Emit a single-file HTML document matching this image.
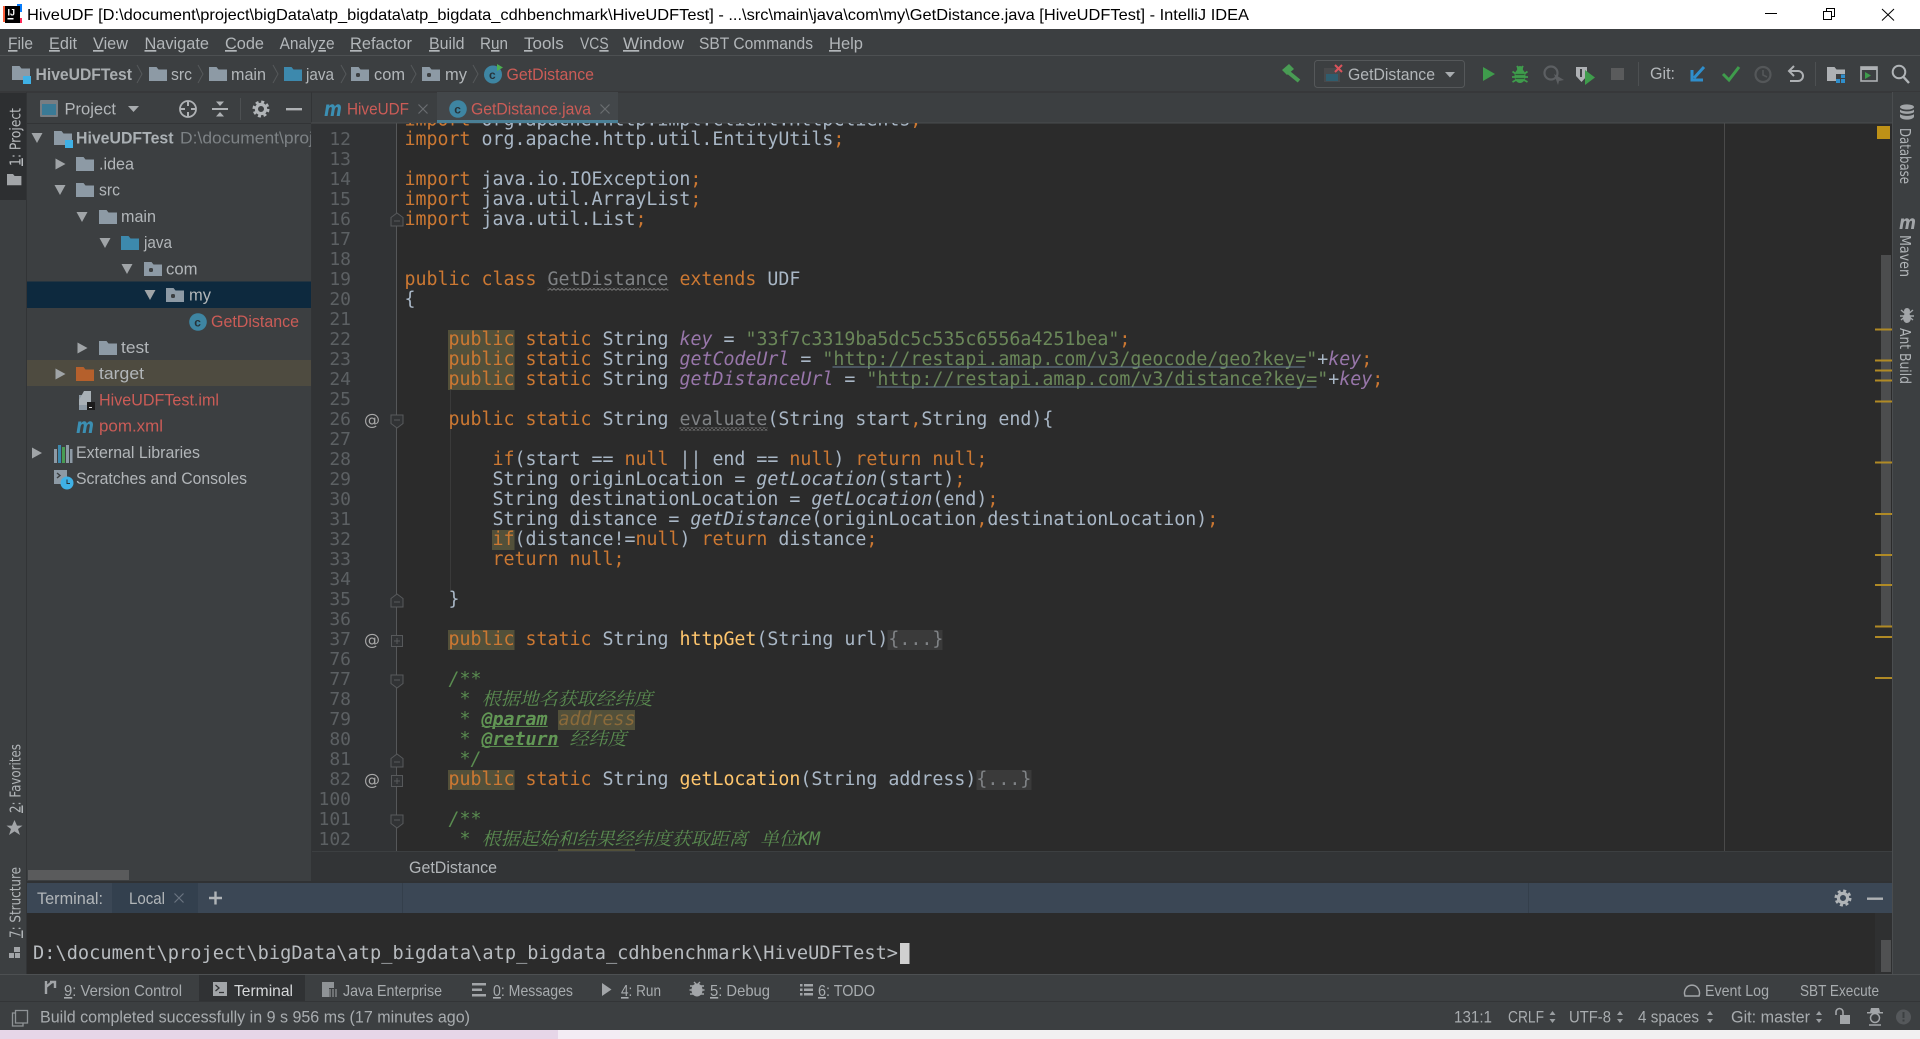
<!DOCTYPE html>
<html><head><meta charset="utf-8"><title>HiveUDF - IntelliJ IDEA</title>
<style>
html,body{margin:0;padding:0;background:#3c3f41;overflow:hidden;width:1920px;height:1039px}
svg{display:block;position:absolute;left:0;top:0}
text{white-space:pre}
.u{font:17px "Liberation Sans",sans-serif;fill:#b2b6b9}
.b{font:16px "Liberation Sans",sans-serif;fill:#a8acaf}
.r{fill:#cb5c57}
.v{font:15px "DejaVu Sans",sans-serif;fill:#b0b4b7}
.m{font:18.27px "DejaVu Sans Mono",monospace;fill:#a9b7c6}
.n{font:18px "DejaVu Sans Mono",monospace;fill:#5c6063;text-anchor:end}
.k{fill:#cc7832}.s{fill:#6a8759}.f{fill:#9876aa;font-style:italic}.y{fill:#ffc66d}.g{fill:#7f8285}.i{font-style:italic}
.c{fill:#5a8c50;font-style:italic}.cb{fill:#629755;font-style:italic;font-weight:bold}
.z{font:italic 18px "Noto Serif CJK SC","Noto Sans CJK SC",serif;fill:#5a8c50}
.ul{text-decoration:underline}
.mi{font:italic bold 21px "DejaVu Sans",sans-serif}
</style></head><body>
<svg xmlns="http://www.w3.org/2000/svg" width="1920" height="1039" viewBox="0 0 1920 1039">
<defs>
<clipPath id="ed"><rect x="311" y="123" width="1581" height="728"/></clipPath>
<clipPath id="tr"><rect x="27" y="124" width="284" height="757"/></clipPath>
<pattern id="wave" width="4" height="3" patternUnits="userSpaceOnUse"><path d="M0 2.5L2 .5L4 2.5" fill="none" stroke="#7a7a7a" stroke-width="1"/></pattern>
<symbol id="fd" viewBox="0 0 18 14" width="18" height="14" overflow="visible"><path d="M0 0h7.5l2 2.5H18V14H0z"/></symbol>
<symbol id="pk" viewBox="0 0 18 14" width="18" height="14" overflow="visible"><path d="M0 0h7.5l2 2.5H18V14H0z"/><rect x="5" y="6" width="4" height="4" rx="1.5" fill="#3c3f41"/></symbol>
<symbol id="ad" viewBox="0 0 11 10" width="11" height="10"><path d="M0 0H11L5.5 10z" fill="#a0a4a7"/></symbol>
<symbol id="ar" viewBox="0 0 10 11" width="10" height="11"><path d="M0 0V11L10 5.5z" fill="#a0a4a7"/></symbol>
<symbol id="gear" viewBox="0 0 18 18" width="18" height="18"><circle cx="9" cy="9" r="4.6" fill="none" stroke="#b0b4b7" stroke-width="3.2"/><circle cx="9" cy="9" r="7.2" fill="none" stroke="#b0b4b7" stroke-width="2.6" stroke-dasharray="3 2.65"/></symbol>
<symbol id="ud" viewBox="0 0 7 12" width="7" height="12"><path d="M3.5 0L6.5 4H.5zM3.5 12L.5 8H6.5z" fill="#9a9ea1"/></symbol>
<symbol id="fs" viewBox="0 0 14 15" width="14" height="15"><path d="M1 1H13V9.5L7 14L1 9.5Z" fill="#313335" stroke="#57595b"/><path d="M4 6H10" stroke="#57595b"/></symbol>
<symbol id="fe" viewBox="0 0 14 15" width="14" height="15"><path d="M1 14H13V5.5L7 1L1 5.5Z" fill="#313335" stroke="#57595b"/><path d="M4 9H10" stroke="#57595b"/></symbol>
<symbol id="fp" viewBox="0 0 12 12" width="12" height="12"><path d="M.5 .5H11.5V11.5H.5Z" fill="#313335" stroke="#57595b"/><path d="M3 6H9M6 3V9" stroke="#57595b"/></symbol>
</defs>

<rect width="1920" height="1039" fill="#3c3f41"/>
<!-- title bar -->
<rect width="1920" height="29" fill="#fff"/>
<rect x="3" y="6" width="6" height="16" fill="#fc5f3c"/><rect x="17" y="4" width="5" height="8" fill="#087cfa"/><rect x="14" y="18" width="8" height="5" fill="#fe2857"/>
<rect x="5" y="6" width="15" height="17" fill="#000"/>
<text x="7.5" y="15.5" style="font:bold 9px 'Liberation Sans',sans-serif" fill="#fff">IJ</text><rect x="7.5" y="18" width="6" height="1.5" fill="#fff"/>
<text x="27" y="20" style="font:16px 'Liberation Sans',sans-serif" fill="#000" textLength="1222" lengthAdjust="spacingAndGlyphs">HiveUDF [D:\document\project\bigData\atp_bigdata\atp_bigdata_cdhbenchmark\HiveUDFTest] - ...\src\main\java\com\my\GetDistance.java [HiveUDFTest] - IntelliJ IDEA</text>
<rect x="1765" y="13" width="12" height="1" fill="#000"/>
<path d="M1823.5 11.5h8v8h-8zM1826.5 11.5v-3h8v8h-3" fill="none" stroke="#000"/>
<path d="M1882 9L1894 20.5M1894 9L1882 20.5" stroke="#000" fill="none"/>

<!-- menu -->
<rect x="0" y="55" width="1920" height="1" fill="#4d5052"/>
<g class="u">
<text class="u" x="8" y="49" textLength="25" lengthAdjust="spacingAndGlyphs"><tspan class="ul">F</tspan>ile</text>
<text class="u" x="49" y="49" textLength="28" lengthAdjust="spacingAndGlyphs"><tspan class="ul">E</tspan>dit</text>
<text class="u" x="93" y="49" textLength="35" lengthAdjust="spacingAndGlyphs"><tspan class="ul">V</tspan>iew</text>
<text class="u" x="144.5" y="49" textLength="64.5" lengthAdjust="spacingAndGlyphs"><tspan class="ul">N</tspan>avigate</text>
<text class="u" x="225" y="49" textLength="39" lengthAdjust="spacingAndGlyphs"><tspan class="ul">C</tspan>ode</text>
<text class="u" x="279.6" y="49" textLength="55" lengthAdjust="spacingAndGlyphs">Analy<tspan class="ul">z</tspan>e</text>
<text class="u" x="350" y="49" textLength="62" lengthAdjust="spacingAndGlyphs"><tspan class="ul">R</tspan>efactor</text>
<text class="u" x="429" y="49" textLength="35.5" lengthAdjust="spacingAndGlyphs"><tspan class="ul">B</tspan>uild</text>
<text class="u" x="480" y="49" textLength="28" lengthAdjust="spacingAndGlyphs">R<tspan class="ul">u</tspan>n</text>
<text class="u" x="524" y="49" textLength="39.7" lengthAdjust="spacingAndGlyphs"><tspan class="ul">T</tspan>ools</text>
<text class="u" x="580" y="49" textLength="28.6" lengthAdjust="spacingAndGlyphs">VC<tspan class="ul">S</tspan></text>
<text class="u" x="623" y="49" textLength="61" lengthAdjust="spacingAndGlyphs"><tspan class="ul">W</tspan>indow</text>
<text class="u" x="699" y="49" textLength="114" lengthAdjust="spacingAndGlyphs">SBT Commands</text>
<text class="u" x="829" y="49" textLength="34" lengthAdjust="spacingAndGlyphs"><tspan class="ul">H</tspan>elp</text>
</g>

<!-- nav toolbar -->
<rect x="0" y="91.5" width="1920" height="1" fill="#323232"/>
<use href="#fd" x="12" y="66" fill="#8d9aa5"/><rect x="23" y="76" width="8" height="8" fill="#3fb1e6"/>
<text class="u" x="35.5" y="80" style="font-weight:bold;fill:#a9adb0" textLength="96.5" lengthAdjust="spacingAndGlyphs">HiveUDFTest</text>
<g fill="none" stroke="#55585a" stroke-width="1">
<path d="M137 65L142 74L137 83M198 65L203 74L198 83M273 65L278 74L273 83M341 65L346 74L341 83M411 65L416 74L411 83M473 65L478 74L473 83"/></g>
<use href="#fd" x="149" y="67" fill="#8d9aa5"/><text class="u" x="171" y="80" textLength="21" lengthAdjust="spacingAndGlyphs">src</text>
<use href="#fd" x="209" y="67" fill="#8d9aa5"/><text class="u" x="231" y="80" textLength="35" lengthAdjust="spacingAndGlyphs">main</text>
<use href="#fd" x="284" y="67" fill="#3d89ad"/><text class="u" x="306" y="80" textLength="28" lengthAdjust="spacingAndGlyphs">java</text>
<use href="#pk" x="351" y="67" fill="#8d9aa5"/><text class="u" x="374" y="80" textLength="31" lengthAdjust="spacingAndGlyphs">com</text>
<use href="#pk" x="422" y="67" fill="#8d9aa5"/><text class="u" x="445" y="80" textLength="22" lengthAdjust="spacingAndGlyphs">my</text>
<circle cx="493" cy="74.5" r="9" fill="#3e85a2"/><text x="489" y="79" style="font:bold 12px 'Liberation Sans',sans-serif" fill="#263238">c</text><path d="M497 64L503 67.5L497 71Z" fill="#4caf50"/>
<text class="u r" x="506.5" y="80" textLength="87.5" lengthAdjust="spacingAndGlyphs">GetDistance</text>

<path d="M1282 70L1289 64L1294 69L1287 75Z" fill="#499c54"/><path d="M1288 72L1299 81" stroke="#499c54" stroke-width="4"/>
<rect x="1314.5" y="60.5" width="150" height="27" rx="3" fill="#3c3f41" stroke="#55585a"/>
<rect x="1324" y="68" width="16" height="14" fill="#48494b"/><rect x="1326" y="74" width="12" height="7" fill="#2f5d6e"/>
<path d="M1335 65L1342 72M1342 65L1335 72" stroke="#d9535b" stroke-width="2"/>
<text class="u" x="1348" y="80" textLength="87" lengthAdjust="spacingAndGlyphs">GetDistance</text>
<path d="M1445 72H1455L1450 77.5Z" fill="#a8acaf"/>
<path d="M1483 67V81L1495 74Z" fill="#3f9c4c"/>
<path d="M1512.5 71.5L1516 74M1527.5 71.5L1524 74M1512 77H1528M1512.5 82L1516 80M1527.5 82L1524 80M1517 66L1518.5 68.5M1523 66L1521.5 68.5" stroke="#3f9c4c" stroke-width="1.8" fill="none"/>
<ellipse cx="1520" cy="76" rx="5.5" ry="7" fill="#3f9c4c"/><circle cx="1520" cy="69" r="3" fill="#3f9c4c"/><path d="M1515.5 74.5H1524.5M1515.5 78.5H1524.5" stroke="#2f5a36" stroke-width="1.3"/>
<circle cx="1551" cy="73" r="6.5" fill="none" stroke="#5c5f62" stroke-width="2.2"/><path d="M1554 74L1564 80L1559 81L1558 85Z" fill="#5c5f62"/>
<path d="M1576 67H1587V76L1581.5 82L1576 76Z" fill="#aeb1b4"/><path d="M1585 70V85L1595 77.5Z" fill="#3f9c4c"/><path d="M1581 69V77" stroke="#3c3f41" stroke-width="2"/>
<rect x="1611" y="68" width="13" height="12" fill="#5a5b5c"/>
<rect x="1638" y="62" width="1" height="24" fill="#4d5052"/>
<text class="u" x="1650" y="79" textLength="25" lengthAdjust="spacingAndGlyphs">Git:</text>
<path d="M1704 67L1694 78" stroke="#2f8ecb" stroke-width="3"/><path d="M1692 70V80H1703" fill="none" stroke="#2f8ecb" stroke-width="3"/>
<path d="M1723 74L1729 80L1739 67" fill="none" stroke="#3f9c4c" stroke-width="3"/>
<circle cx="1763" cy="74.5" r="7.5" fill="none" stroke="#545759" stroke-width="2.2"/><path d="M1763 70V75L1767 77" fill="none" stroke="#545759" stroke-width="1.6"/>
<path d="M1790 71H1798A5 5 0 0 1 1798 81H1790" fill="none" stroke="#aeb1b4" stroke-width="2"/><path d="M1794 66L1789 71L1794 76" fill="none" stroke="#aeb1b4" stroke-width="2"/>
<rect x="1815" y="62" width="1" height="24" fill="#4d5052"/>
<use href="#fd" x="1827" y="67" fill="#aeb1b4"/><rect x="1836" y="74" width="9" height="9" fill="#3c3f41"/><path d="M1841 74.5h4v3.5h-4zM1836 79h4v4h-4zM1841 79h4v4h-4z" fill="#2f8ecb"/>
<rect x="1861" y="67" width="16" height="14" fill="none" stroke="#aeb1b4" stroke-width="1.6"/><rect x="1861" y="67" width="16" height="3" fill="#aeb1b4"/><path d="M1865 72V79L1871 75.5Z" fill="#3f9c4c"/>
<circle cx="1899" cy="72" r="6.3" fill="none" stroke="#b0b4b7" stroke-width="2"/><path d="M1903.5 77L1909 83" stroke="#b0b4b7" stroke-width="2.4"/>

<!-- left strip -->
<rect x="26" y="92" width="1" height="882" fill="#323436"/>
<rect x="0" y="93" width="26" height="107" fill="#2d2f31"/>
<text class="v" transform="translate(20.5 166) rotate(-90)" textLength="58" lengthAdjust="spacingAndGlyphs" style="fill:#b8bbbe"><tspan class="ul">1</tspan>: Project</text>
<use href="#fd" x="0" y="0" transform="translate(7 174) scale(.8)" fill="#a2a5a8"/>
<text class="v" transform="translate(20.5 813) rotate(-90)" textLength="69" lengthAdjust="spacingAndGlyphs"><tspan class="ul">2</tspan>: Favorites</text>
<path d="M14.5 820L17 825.6H22.5L18 829L20 835L14.5 831.4L9 835L11 829L6.5 825.6H12Z" fill="#a2a5a8"/>
<text class="v" transform="translate(20.5 938) rotate(-90)" textLength="71" lengthAdjust="spacingAndGlyphs"><tspan class="ul">7</tspan>: Structure</text>
<path d="M14 947h6v5h-6zM9 953h5v5H9zM15 953h5v5h-5z" fill="#a2a5a8"/>

<!-- project panel -->
<rect x="27" y="123" width="284" height="1" fill="#323436"/>
<rect x="40" y="100" width="18" height="17" rx="1" fill="#787d82"/><rect x="42" y="104" width="14" height="11" fill="#3a7a96"/>
<text class="u" x="64.5" y="114.5" textLength="51.5" lengthAdjust="spacingAndGlyphs">Project</text>
<path d="M128 106H139L133.5 112Z" fill="#a8acaf"/>
<circle cx="188" cy="109" r="8" fill="none" stroke="#aeb1b4" stroke-width="1.8"/><path d="M188 101V106M188 112V117M180 109H185M191 109H196" stroke="#aeb1b4" stroke-width="2"/>
<path d="M212 109H228" stroke="#aeb1b4" stroke-width="2"/><path d="M216 101.5H224L220 106ZM216 116.5H224L220 112Z" fill="#aeb1b4"/>
<rect x="240" y="98" width="1" height="22" fill="#4d5052"/>
<use href="#gear" x="252" y="100"/>
<rect x="286" y="108" width="16" height="2.4" fill="#aeb1b4"/>

<rect x="27" y="281.5" width="284" height="26.5" fill="#0d293e"/>
<rect x="27" y="360" width="284" height="26" fill="#4e4b40"/>
<g clip-path="url(#tr)">
<use href="#ad" x="31.5" y="133"/><use href="#fd" x="54" y="131" fill="#8d9aa5"/><rect x="65" y="140" width="8" height="8" fill="#3fb1e6"/>
<text class="u" x="76" y="143.5" style="font-weight:bold;fill:#aab0b4" textLength="97.5" lengthAdjust="spacingAndGlyphs">HiveUDFTest</text>
<text class="u" x="180" y="143.5" style="fill:#7d8285" textLength="133" lengthAdjust="spacingAndGlyphs">D:\document\proj</text>
<use href="#ar" x="55.5" y="158.5"/><use href="#fd" x="76" y="157" fill="#8d9aa5"/><text class="u" x="99" y="169.5" textLength="35" lengthAdjust="spacingAndGlyphs">.idea</text>
<use href="#ad" x="54.5" y="185"/><use href="#fd" x="76" y="183" fill="#8d9aa5"/><text class="u" x="99" y="195.7" textLength="21" lengthAdjust="spacingAndGlyphs">src</text>
<use href="#ad" x="76.5" y="212"/><use href="#fd" x="99" y="210" fill="#8d9aa5"/><text class="u" x="121" y="222" textLength="35" lengthAdjust="spacingAndGlyphs">main</text>
<use href="#ad" x="99.5" y="238"/><use href="#fd" x="121" y="236" fill="#3d89ad"/><text class="u" x="144" y="248" textLength="28" lengthAdjust="spacingAndGlyphs">java</text>
<use href="#ad" x="121.5" y="264"/><use href="#pk" x="144" y="262" fill="#8d9aa5"/><text class="u" x="166" y="274.4" textLength="31.5" lengthAdjust="spacingAndGlyphs">com</text>
<use href="#ad" x="144.5" y="290"/><use href="#pk" x="166" y="288" fill="#8d9aa5"/><text class="u" x="189" y="300.6" textLength="22" lengthAdjust="spacingAndGlyphs">my</text>
<circle cx="198" cy="322" r="8.8" fill="#3e85a2"/><text x="194.3" y="326.5" style="font:bold 12px 'Liberation Sans',sans-serif" fill="#263238">c</text>
<text class="u r" x="211" y="326.8" textLength="88" lengthAdjust="spacingAndGlyphs">GetDistance</text>
<use href="#ar" x="77.5" y="342.5"/><use href="#fd" x="99" y="341" fill="#8d9aa5"/><text class="u" x="121" y="353" textLength="28" lengthAdjust="spacingAndGlyphs">test</text>
<use href="#ar" x="55.5" y="368.5"/><use href="#fd" x="76" y="367" fill="#b5602c"/><text class="u" x="99" y="379.2" textLength="45" lengthAdjust="spacingAndGlyphs">target</text>
<path d="M79 395H88V410H79Z" fill="#8d9aa5"/><path d="M79 400L84 391H91V405H79Z" fill="#a8b0b6"/><rect x="87" y="402" width="8" height="8" fill="#1c1c1c"/><rect x="89" y="407" width="3" height="1" fill="#ddd"/>
<text class="u r" x="99" y="405.4" textLength="120" lengthAdjust="spacingAndGlyphs">HiveUDFTest.iml</text>
<text class="mi" x="76" y="433" fill="#3b8fb3" textLength="18" lengthAdjust="spacingAndGlyphs">m</text>
<text class="u r" x="99" y="431.6" textLength="64" lengthAdjust="spacingAndGlyphs">pom.xml</text>
<use href="#ar" x="32" y="447.5"/><path d="M54 449h3v14h-3z" fill="#8d9aa5"/><path d="M58 445h3v18h-3z" fill="#3d89ad"/><path d="M62 447h3v16h-3z" fill="#499c54"/><path d="M66 445h3v18h-3z" fill="#8d9aa5"/><path d="M70 449h2.5v14H70z" fill="#8d9aa5"/>
<text class="u" x="76" y="457.8" textLength="124" lengthAdjust="spacingAndGlyphs">External Libraries</text>
<rect x="54" y="470" width="13" height="14" fill="#8d9aa5"/><path d="M57 473l3 2.5-3 2.5" fill="none" stroke="#3c3f41" stroke-width="1.4"/><circle cx="67" cy="483" r="6.5" fill="#3fb1e6"/><path d="M67 479.5V483.5H70" fill="none" stroke="#263238" stroke-width="1"/>
<text class="u" x="76" y="484" textLength="171" lengthAdjust="spacingAndGlyphs">Scratches and Consoles</text>
</g>
<rect x="28" y="870" width="101" height="10" fill="#5a5b5c"/>

<!-- tabs -->
<rect x="311" y="92" width="1" height="789" fill="#323436"/>
<rect x="311" y="122.5" width="1581" height="1" fill="#4a4d4f"/>
<text class="mi" x="324" y="116" fill="#3b8fb3" textLength="18" lengthAdjust="spacingAndGlyphs">m</text>
<text class="u r" x="347" y="114.5" textLength="62" lengthAdjust="spacingAndGlyphs">HiveUDF</text>
<path d="M418.5 104.5L427.5 113.5M427.5 104.5L418.5 113.5" stroke="#6a6d70" stroke-width="1.2"/>
<rect x="437" y="92" width="181" height="31" fill="#43474a"/>
<rect x="437" y="120" width="181" height="3" fill="#4a7f95"/>
<circle cx="458" cy="109" r="8.8" fill="#3e85a2"/><text x="454.3" y="113.5" style="font:bold 12px 'Liberation Sans',sans-serif" fill="#263238">c</text>
<text class="u r" x="471" y="114.5" textLength="120" lengthAdjust="spacingAndGlyphs">GetDistance.java</text>
<path d="M600.5 104.5L609.5 113.5M609.5 104.5L600.5 113.5" stroke="#6a6d70" stroke-width="1.2"/>

<!-- editor -->
<rect x="312" y="123.5" width="85" height="727.5" fill="#313335"/>
<rect x="397" y="123.5" width="1495" height="727.5" fill="#2b2b2b"/>
<rect x="396" y="123.5" width="1" height="727.5" fill="#555759"/>
<rect x="1724" y="123.5" width="1" height="727.5" fill="#4a4a4a"/>
<rect x="450" y="350" width="1" height="240" fill="#3a3a3a"/>

<g fill="#52503a">
<rect x="448" y="330" width="66.5" height="60"/>
<rect x="448" y="630" width="66.5" height="20"/>
<rect x="448" y="770" width="66.5" height="20"/>
<rect x="492" y="530" width="22.5" height="20"/>
<rect x="558" y="710" width="77" height="20"/>
<rect x="558" y="849" width="77" height="2"/>
</g>
<rect x="887.5" y="630" width="55" height="20" fill="#3a3a3a"/>
<rect x="976.5" y="770" width="55" height="20" fill="#3a3a3a"/>

<g class="n">
<text class="n" x="351" y="145">12</text><text class="n" x="351" y="165">13</text><text class="n" x="351" y="185">14</text><text class="n" x="351" y="205">15</text><text class="n" x="351" y="225">16</text><text class="n" x="351" y="245">17</text><text class="n" x="351" y="265">18</text><text class="n" x="351" y="285">19</text><text class="n" x="351" y="305">20</text><text class="n" x="351" y="325">21</text><text class="n" x="351" y="345">22</text><text class="n" x="351" y="365">23</text><text class="n" x="351" y="385">24</text><text class="n" x="351" y="405">25</text><text class="n" x="351" y="425">26</text><text class="n" x="351" y="445">27</text><text class="n" x="351" y="465">28</text><text class="n" x="351" y="485">29</text><text class="n" x="351" y="505">30</text><text class="n" x="351" y="525">31</text><text class="n" x="351" y="545">32</text><text class="n" x="351" y="565">33</text><text class="n" x="351" y="585">34</text><text class="n" x="351" y="605">35</text><text class="n" x="351" y="625">36</text><text class="n" x="351" y="645">37</text><text class="n" x="351" y="665">76</text><text class="n" x="351" y="685">77</text><text class="n" x="351" y="705">78</text><text class="n" x="351" y="725">79</text><text class="n" x="351" y="745">80</text><text class="n" x="351" y="765">81</text><text class="n" x="351" y="785">82</text><text class="n" x="351" y="805">100</text><text class="n" x="351" y="825">101</text><text class="n" x="351" y="845">102</text>
</g>
<g style="font:16px 'DejaVu Sans',sans-serif" fill="#a9a9a9"><text x="364" y="425">@</text><text x="364" y="645">@</text><text x="364" y="785">@</text></g>
<use href="#fe" x="390" y="212"/><use href="#fs" x="390" y="414"/><use href="#fe" x="390" y="593"/><use href="#fp" x="391" y="635"/><use href="#fs" x="390" y="674"/><use href="#fe" x="390" y="753"/><use href="#fp" x="391" y="775"/><use href="#fs" x="390" y="814"/>

<g clip-path="url(#ed)">
<text class="m" x="404.5" y="125.5"><tspan class="k">import</tspan> org.apache.http.impl.client.HttpClients<tspan class="k">;</tspan></text>
<text class="m" x="404.5" y="145"><tspan class="k">import</tspan> org.apache.http.util.EntityUtils<tspan class="k">;</tspan></text>
<text class="m" x="404.5" y="185"><tspan class="k">import</tspan> java.io.IOException<tspan class="k">;</tspan></text>
<text class="m" x="404.5" y="205"><tspan class="k">import</tspan> java.util.ArrayList<tspan class="k">;</tspan></text>
<text class="m" x="404.5" y="225"><tspan class="k">import</tspan> java.util.List<tspan class="k">;</tspan></text>
<text class="m" x="404.5" y="285"><tspan class="k">public class</tspan> <tspan class="g">GetDistance</tspan> <tspan class="k">extends</tspan> UDF</text>
<text class="m" x="404.5" y="305">{</text>
<text class="m" x="404.5" y="345">    <tspan class="k">public static</tspan> String <tspan class="f">key</tspan> = <tspan class="s">"33f7c3319ba5dc5c535c6556a4251bea"</tspan><tspan class="k">;</tspan></text>
<text class="m" x="404.5" y="365">    <tspan class="k">public static</tspan> String <tspan class="f">getCodeUrl</tspan> = <tspan class="s">"http://restapi.amap.com/v3/geocode/geo?key="</tspan>+<tspan class="f">key</tspan><tspan class="k">;</tspan></text>
<text class="m" x="404.5" y="385">    <tspan class="k">public static</tspan> String <tspan class="f">getDistanceUrl</tspan> = <tspan class="s">"http://restapi.amap.com/v3/distance?key="</tspan>+<tspan class="f">key</tspan><tspan class="k">;</tspan></text>
<text class="m" x="404.5" y="425">    <tspan class="k">public static</tspan> String <tspan class="g">evaluate</tspan>(String start<tspan class="k">,</tspan>String end){</text>
<text class="m" x="404.5" y="465">        <tspan class="k">if</tspan>(start == <tspan class="k">null</tspan> || end == <tspan class="k">null</tspan>) <tspan class="k">return null;</tspan></text>
<text class="m" x="404.5" y="485">        String originLocation = <tspan class="i">getLocation</tspan>(start)<tspan class="k">;</tspan></text>
<text class="m" x="404.5" y="505">        String destinationLocation = <tspan class="i">getLocation</tspan>(end)<tspan class="k">;</tspan></text>
<text class="m" x="404.5" y="525">        String distance = <tspan class="i">getDistance</tspan>(originLocation<tspan class="k">,</tspan>destinationLocation)<tspan class="k">;</tspan></text>
<text class="m" x="404.5" y="545">        <tspan class="k">if</tspan>(distance!=<tspan class="k">null</tspan>) <tspan class="k">return</tspan> distance<tspan class="k">;</tspan></text>
<text class="m" x="404.5" y="565">        <tspan class="k">return null;</tspan></text>
<text class="m" x="404.5" y="605">    }</text>
<text class="m" x="404.5" y="645">    <tspan class="k">public static</tspan> String <tspan class="y">httpGet</tspan>(String url)<tspan style="fill:#7f8285">{...}</tspan></text>
<text class="m c" x="404.5" y="685">    /**</text>
<text class="m c" x="404.5" y="705">     *</text><text class="z" x="481.7" y="705" textLength="171" lengthAdjust="spacingAndGlyphs">根据地名获取经纬度</text>
<text class="m c" x="404.5" y="725">     * <tspan class="cb">@param</tspan> <tspan style="fill:#8a6a3a">address</tspan></text>
<text class="m c" x="404.5" y="745">     * <tspan class="cb">@return</tspan></text><text class="z" x="569.4" y="745" textLength="57" lengthAdjust="spacingAndGlyphs">经纬度</text>
<text class="m c" x="404.5" y="765">     */</text>
<text class="m" x="404.5" y="785">    <tspan class="k">public static</tspan> String <tspan class="y">getLocation</tspan>(String address)<tspan style="fill:#7f8285">{...}</tspan></text>
<text class="m c" x="404.5" y="825">    /**</text>
<text class="m c" x="404.5" y="845">     *</text><text class="z" x="481.7" y="845" textLength="266" lengthAdjust="spacingAndGlyphs">根据起始和结果经纬度获取距离</text><text class="z" x="760" y="845" textLength="38" lengthAdjust="spacingAndGlyphs">单位</text><text class="m c" x="798" y="845">KM</text>
</g>
<rect x="547.5" y="287.5" width="121" height="3" fill="url(#wave)"/>
<rect x="679.5" y="427.5" width="88" height="3" fill="url(#wave)"/>
<rect x="832.5" y="366.5" width="472" height="1" fill="#6a7f96"/>
<rect x="876.5" y="386.5" width="440" height="1" fill="#6a7f96"/>
<rect x="481.7" y="726" width="66" height="1" fill="#5a8c50"/>
<rect x="481.7" y="746" width="77" height="1" fill="#5a8c50"/>

<!-- scrollbar / stripe -->
<rect x="1881" y="255" width="10" height="371" fill="#4c4d4e"/>
<rect x="1877" y="126" width="13" height="13" fill="#be9117"/>
<g fill="#b08a25">
<rect x="1875" y="328.5" width="17" height="2"/><rect x="1875" y="359.5" width="17" height="2"/><rect x="1875" y="369.5" width="17" height="2"/><rect x="1875" y="379.5" width="17" height="2"/><rect x="1875" y="400.5" width="17" height="2"/><rect x="1875" y="461.5" width="17" height="2"/><rect x="1875" y="513" width="17" height="2"/><rect x="1875" y="554" width="17" height="2"/><rect x="1875" y="584" width="17" height="2"/><rect x="1875" y="625.5" width="17" height="2"/><rect x="1875" y="636" width="17" height="2"/><rect x="1875" y="677" width="17" height="2"/>
</g>

<!-- right strip -->
<rect x="1892" y="92" width="1" height="882" fill="#4a4d4f"/>
<rect x="1893" y="92" width="27" height="882" fill="#3c3f41"/>
<g fill="#a2a5a8"><ellipse cx="1907" cy="107" rx="7" ry="2.6"/><path d="M1900 109.5C1902 112 1912 112 1914 109.5V112C1912 114.5 1902 114.5 1900 112ZM1900 114C1902 116.5 1912 116.5 1914 114V117C1912 120.5 1902 120.5 1900 117Z"/></g>
<text class="v" transform="translate(1900 128) rotate(90)" textLength="56" lengthAdjust="spacingAndGlyphs">Database</text>
<text class="mi" x="1899" y="229" style="font-size:19px" fill="#a2a5a8" textLength="17" lengthAdjust="spacingAndGlyphs">m</text>
<text class="v" transform="translate(1900 235) rotate(90)" textLength="42" lengthAdjust="spacingAndGlyphs">Maven</text>
<g fill="#a2a5a8"><ellipse cx="1907" cy="311" rx="3" ry="3"/><ellipse cx="1907" cy="318" rx="4" ry="5"/></g><path d="M1901 310L1913 320M1913 310L1901 320M1900 316H1914" stroke="#a2a5a8" stroke-width="1.4"/>
<text class="v" transform="translate(1900 328) rotate(90)" textLength="56" lengthAdjust="spacingAndGlyphs">Ant Build</text>

<!-- editor breadcrumb -->
<rect x="312" y="851" width="1580" height="30" fill="#323436"/>
<rect x="312" y="851" width="1580" height="1" fill="#3c3f41"/>
<text class="u" x="409" y="873" textLength="88" lengthAdjust="spacingAndGlyphs">GetDistance</text>

<!-- terminal -->
<rect x="27" y="881" width="1865" height="2" fill="#303234"/>
<rect x="27" y="883" width="1865" height="30" fill="#3b4755"/>
<rect x="112" y="883" width="86" height="30" fill="#33404e"/>
<rect x="402" y="883" width="1" height="30" fill="#343f4b"/><rect x="1528" y="883" width="1" height="30" fill="#343f4b"/>
<text class="u" x="37" y="904" textLength="66" lengthAdjust="spacingAndGlyphs">Terminal:</text>
<text class="u" x="129" y="904" textLength="36" lengthAdjust="spacingAndGlyphs">Local</text>
<path d="M174.5 893.5L183.5 902.5M183.5 893.5L174.5 902.5" stroke="#6a7480" stroke-width="1.2"/>
<path d="M209 898H222M215.5 891.5V904.5" stroke="#b0b4b7" stroke-width="2.4"/>
<use href="#gear" x="1834" y="889"/>
<rect x="1867" y="897.5" width="16" height="2.4" fill="#aeb1b4"/>
<rect x="27" y="913" width="1865" height="61" fill="#2b2b2b"/>
<text class="m" x="33" y="959" style="font-size:18.6px;fill:#b8bcc0" textLength="865" lengthAdjust="spacing">D:\document\project\bigData\atp_bigdata\atp_bigdata_cdhbenchmark\HiveUDFTest&gt;</text>
<rect x="900" y="943" width="9.5" height="21" fill="#d0d0d0"/>
<rect x="1875" y="913" width="17" height="61" fill="#2f3031"/>
<rect x="1881" y="940" width="10" height="32" fill="#505152"/>

<!-- tool buttons bar -->
<rect x="0" y="974" width="1920" height="1" fill="#4d5052"/>
<rect x="0" y="1001" width="1920" height="1" fill="#333537"/>
<rect x="199" y="975" width="106" height="26" fill="#303234"/>
<path d="M46 981V994M46 987L52 982M50 982H55V988" fill="none" stroke="#a2a5a8" stroke-width="2.4"/>
<text class="b" x="64" y="996" textLength="118" lengthAdjust="spacingAndGlyphs"><tspan class="ul">9</tspan>: Version Control</text>
<rect x="213" y="982" width="14" height="14" fill="#a2a5a8"/><path d="M215.5 985L219 988L215.5 991M219 992.5H224" fill="none" stroke="#303234" stroke-width="1.3"/>
<text class="b" x="234" y="996" style="fill:#d6d8da" textLength="59" lengthAdjust="spacingAndGlyphs">Terminal</text>
<rect x="322" y="982" width="12" height="15" fill="#8f9396"/><rect x="329" y="988" width="8" height="9" fill="#3c3f41"/><path d="M330 989v8M333 989v8M336 989v8" stroke="#a2a5a8"/>
<text class="b" x="343" y="996" textLength="99" lengthAdjust="spacingAndGlyphs">Java Enterprise</text>
<path d="M472 983H486V985.5H472ZM472 988.5H482V991H472ZM472 994H486V996.5H472Z" fill="#a2a5a8"/>
<text class="b" x="493" y="996" textLength="80" lengthAdjust="spacingAndGlyphs"><tspan class="ul">0</tspan>: Messages</text>
<path d="M602 983V996L611.5 989.5Z" fill="#a2a5a8"/>
<text class="b" x="621" y="996" textLength="40" lengthAdjust="spacingAndGlyphs"><tspan class="ul">4</tspan>: Run</text>
<ellipse cx="697" cy="990" rx="5.5" ry="6.5" fill="#a2a5a8"/><path d="M690 986H704M689.5 990H704.5M690 994H704M694 982L696 984M700 982L698 984" stroke="#a2a5a8" stroke-width="1.4"/>
<text class="b" x="710" y="996" textLength="60" lengthAdjust="spacingAndGlyphs"><tspan class="ul">5</tspan>: Debug</text>
<path d="M800 984H802.5V986.5H800ZM804 984H813V986.5H804ZM800 988.5H802.5V991H800ZM804 988.5H813V991H804ZM800 993H802.5V995.5H800ZM804 993H813V995.5H804Z" fill="#a2a5a8"/>
<text class="b" x="818" y="996" textLength="57" lengthAdjust="spacingAndGlyphs"><tspan class="ul">6</tspan>: TODO</text>
<path d="M1685 996A7.5 8 0 1 1 1699 996Z" fill="none" stroke="#a2a5a8" stroke-width="1.5"/>
<text class="b" x="1705" y="996" textLength="64" lengthAdjust="spacingAndGlyphs">Event Log</text>
<text class="b" x="1800" y="996" textLength="79" lengthAdjust="spacingAndGlyphs">SBT Execute</text>

<!-- status bar -->
<path d="M15.5 1013H12.5V1026H23V1023M15.5 1010.5H27.5V1023H15.5Z" fill="none" stroke="#8f9396" stroke-width="1.3"/>
<text class="u" x="40" y="1022.5" style="fill:#a8acaf" textLength="430" lengthAdjust="spacingAndGlyphs">Build completed successfully in 9 s 956 ms (17 minutes ago)</text>
<text class="u" x="1454" y="1022.5" style="fill:#a8acaf" textLength="38" lengthAdjust="spacingAndGlyphs">131:1</text>
<text class="u" x="1508" y="1022.5" style="fill:#a8acaf" textLength="36" lengthAdjust="spacingAndGlyphs">CRLF</text><use href="#ud" x="1549" y="1011"/>
<text class="u" x="1569" y="1022.5" style="fill:#a8acaf" textLength="42" lengthAdjust="spacingAndGlyphs">UTF-8</text><use href="#ud" x="1616.5" y="1011"/>
<text class="u" x="1638" y="1022.5" style="fill:#a8acaf" textLength="61" lengthAdjust="spacingAndGlyphs">4 spaces</text><use href="#ud" x="1706.5" y="1011"/>
<text class="u" x="1731" y="1022.5" style="fill:#a8acaf" textLength="79" lengthAdjust="spacingAndGlyphs">Git: master</text><use href="#ud" x="1815.5" y="1011"/>
<rect x="1840" y="1015" width="10" height="9" fill="#a2a5a8"/><path d="M1836 1015V1012A3.5 3.5 0 0 1 1843 1012V1015" fill="none" stroke="#a2a5a8" stroke-width="1.6"/>
<path d="M1871 1008H1879L1880 1012H1883V1013.5H1867V1012H1870Z" fill="#a2a5a8"/><circle cx="1875" cy="1018" r="4.5" fill="none" stroke="#a2a5a8" stroke-width="1.5"/><path d="M1869 1025H1881" stroke="#a2a5a8" stroke-width="1.5"/>
<circle cx="1903.5" cy="1017" r="7.5" fill="#55585b"/><rect x="1902.5" y="1012" width="2" height="6" fill="#3c3f41"/><rect x="1902.5" y="1019.5" width="2" height="2" fill="#3c3f41"/>

<!-- taskbar sliver -->
<rect x="0" y="1030" width="1920" height="9" fill="#f1f0f1"/>
<rect x="0" y="1030" width="558" height="9" fill="#e6d6e8"/>
<rect x="558" y="1030" width="62" height="9" fill="#f3ecf4"/>
<text x="1790" y="1049" style="font:15px 'Liberation Sans',sans-serif" fill="#000">15:18</text>
</svg>
</body></html>
